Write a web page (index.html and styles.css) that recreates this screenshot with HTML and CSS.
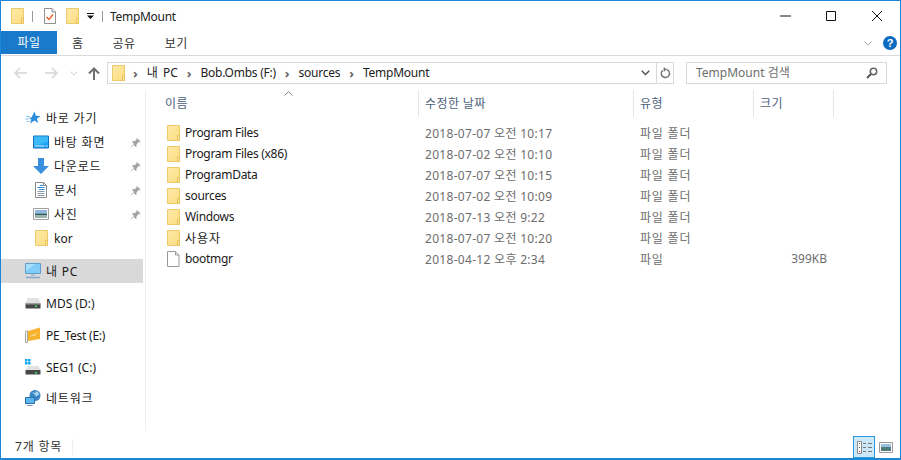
FILE: index.html
```html
<!DOCTYPE html>
<html lang="ko">
<head>
<meta charset="utf-8">
<title>TempMount</title>
<link rel="stylesheet" href="styles.css">
</head>
<body>
<svg class="defs" width="0" height="0" aria-hidden="true">
  <defs>
    <linearGradient id="fg" x1="0" y1="0" x2="1" y2="1">
      <stop offset="0" stop-color="#feeaa8"/>
      <stop offset="1" stop-color="#fbdc82"/>
    </linearGradient>
  </defs>
  <symbol id="folder" viewBox="0 0 13 16">
    <path d="M.5.500h12v15H.5z" fill="url(#fg)" stroke="#ecca6c"/>
    <path d="M10.500 10.500h2v5h-2z" fill="#fbe59c" stroke="#e8c25c"/>
  </symbol>
  <symbol id="pin" viewBox="0 0 11 11">
    <path d="M6.500.5l4 4-1 .8-.8-.2-2.200 2.200.2 1.800-1 .9-2-2L.8 10.500l-.3-.3 3.500-3.100-2-2 .9-1 1.800.2L6.900 2.100l-.2-.8z" fill="#a3a3a3"/>
  </symbol>
  <symbol id="drive" viewBox="0 0 16 12">
    <path d="M2.500 1h11L15.500 6.500H.5z" fill="#e2e2e2"/>
    <path d="M.5 6.500h15v5H.5z" fill="#474747"/>
    <path d="M.5 6.500h15v1H.5z" fill="#9a9a9a"/>
    <path d="M10 8.500h2v1.500h-2z" fill="#39e05a"/>
  </symbol>
</svg>
<div class="window">
  <header class="titlebar">
    <div class="qat">
      <svg class="ico-folder"><use href="#folder"/></svg>
      <span class="qat-sep"></span>
      <svg class="ico-prop" viewBox="0 0 12 16"><path d="M.5.500h7.500l3.500 3.500v11.500H.5z" fill="#fff" stroke="#8f8f8f"/><path d="M8 .5v3.500h3.500" fill="#e8e8e8" stroke="#8f8f8f"/><path d="M2.500 9l2.500 2.500 4-5" fill="none" stroke="#e8642c" stroke-width="1.500"/></svg>
      <svg class="ico-folder qat-gap"><use href="#folder"/></svg>
      <svg class="ico-caret" viewBox="0 0 7 6"><path d="M0 0h7v1H0zM0 2.500h7L3.500 6z" fill="#111"/></svg>
      <span class="qat-sep qat-sep2"></span>
    </div>
    <span class="title">TempMount</span>
    <div class="winctl">
      <svg class="ctl" viewBox="0 0 46 30"><path d="M18 15h11" stroke="#111" fill="none"/></svg>
      <svg class="ctl" viewBox="0 0 46 30"><path d="M18.500 10.500h9v9h-9z" stroke="#111" fill="none"/></svg>
      <svg class="ctl" viewBox="0 0 46 30"><path d="M18 10l10 10M28 10L18 20" stroke="#111" fill="none"/></svg>
    </div>
  </header>

  <nav class="ribbon">
    <span class="tab tab-file">파일</span>
    <span class="tab tab-home">홈</span>
    <span class="tab tab-share">공유</span>
    <span class="tab tab-view">보기</span>
    <svg class="rib-chev" viewBox="0 0 8 5"><path d="M.5.500L4 4 7.500.500" fill="none" stroke="#a8a8a8"/></svg>
    <svg class="help" viewBox="0 0 14 14"><circle cx="7" cy="7" r="7" fill="#0d6cc0"/><text x="7" y="11" class="help-q">?</text></svg>
  </nav>

  <div class="addressbar">
    <svg class="nav-arrow" viewBox="0 0 14 12"><path d="M6 1L1 6l5 5M1 6h12" fill="none" stroke="#d4d4d4" stroke-width="1.500"/></svg>
    <svg class="nav-arrow nav-fwd" viewBox="0 0 14 12"><path d="M8 1l5 5-5 5M13 6H1" fill="none" stroke="#d4d4d4" stroke-width="1.500"/></svg>
    <svg class="nav-down" viewBox="0 0 8 5"><path d="M.5.500L4 4 7.500.500" fill="none" stroke="#d0d0d0"/></svg>
    <svg class="nav-up" viewBox="0 0 12 13"><path d="M1 6.500L6 1.500l5 5M6 2v11" fill="none" stroke="#6f6f6f" stroke-width="2"/></svg>
    <div class="path">
      <svg class="ico-folder path-folder"><use href="#folder"/></svg>
      <span class="crumb-sep">›</span><span class="crumb crumb-pc">내 PC</span>
      <span class="crumb-sep">›</span><span class="crumb">Bob.Ombs (F:)</span>
      <span class="crumb-sep">›</span><span class="crumb">sources</span>
      <span class="crumb-sep">›</span><span class="crumb">TempMount</span>
      <svg class="path-chev" viewBox="0 0 9 6"><path d="M.7.700L4.500 4.500 8.300.700" fill="none" stroke="#555" stroke-width="1.500"/></svg>
      <span class="path-refresh">
        <svg viewBox="0 0 12 13" class="refresh"><path d="M7 2.600A4.500 4.500 0 1 1 3 3.500" fill="none" stroke="#6e6e6e" stroke-width="1.500"/><path d="M4 0v5.500l3-3z" fill="#6e6e6e"/></svg>
      </span>
    </div>
    <div class="search">
      <span class="search-text">TempMount 검색</span>
      <svg class="search-ico" viewBox="0 0 12 12"><circle cx="7.500" cy="4.500" r="3.200" fill="none" stroke="#666" stroke-width="1.500"/><path d="M5 7l-4 4" stroke="#555" stroke-width="2"/></svg>
    </div>
  </div>

  <div class="main">
    <aside class="sidebar">
      <div class="nav-item lvl0">
        <svg class="nico" viewBox="0 0 16 16"><path d="M9.500 1.500l1.400 4.300 4.600.2-3.600 2.700 1.300 4.400-3.700-2.600L5 13.500l1.300-3.900L3.500 7.800l3-.3z" fill="#2b8fdf"/><path d="M1 6.500h3.500M0 9h4M1.500 11.500h3" stroke="#8fc8f0"/></svg>
        <span class="ko">바로 가기</span>
      </div>
      <div class="nav-item lvl1">
        <svg class="nico" viewBox="0 0 16 13"><path d="M.5.500h15v12H.5z" fill="#1ea3f0" stroke="#1070bc"/><path d="M1 1l14 0v5L5 9.500H1z" fill="#3cbaf6"/><path d="M1.500 10.500h10" stroke="#d6f0ff"/><path d="M13 10.500h1.500" stroke="#d6f0ff"/></svg>
        <span class="ko">바탕 화면</span>
        <svg class="pin"><use href="#pin"/></svg>
      </div>
      <div class="nav-item lvl1">
        <svg class="nico" viewBox="0 0 16 16"><path d="M5 0h6v8h5l-8 8-8-8h5z" fill="#3a8ede"/></svg>
        <span class="ko">다운로드</span>
        <svg class="pin"><use href="#pin"/></svg>
      </div>
      <div class="nav-item lvl1">
        <svg class="nico" viewBox="0 0 16 16"><path d="M2.500.5h8l3 3v12h-11z" fill="#fff" stroke="#8a8a8a"/><path d="M10.500.5v3h3" fill="none" stroke="#8a8a8a"/><path d="M7 3.500h3M4.500 5.500h7M6 7.500h5.500" stroke="#2f8fdc"/><path d="M4.500 9.500h7M4.500 11.500h7M4.500 13.500h7" stroke="#8a9aa8"/></svg>
        <span class="ko">문서</span>
        <svg class="pin"><use href="#pin"/></svg>
      </div>
      <div class="nav-item lvl1">
        <svg class="nico" viewBox="0 0 16 13"><path d="M.5 1h15v11H.5z" fill="#fff" stroke="#a0a0a0"/><path d="M2 2.500h12v3.500H2z" fill="#8fb8e0"/><path d="M2 6h12v1.500H2z" fill="#2d5d5a"/><path d="M2 7.500h12v3H2z" fill="#9bb4ac"/></svg>
        <span class="ko">사진</span>
        <svg class="pin"><use href="#pin"/></svg>
      </div>
      <div class="nav-item lvl1">
        <svg class="nico-folder"><use href="#folder"/></svg>
        <span>kor</span>
      </div>
      <div class="nav-item lvl0 selected">
        <svg class="nico" viewBox="0 0 16 16"><path d="M.5.500h15v10H.5z" fill="#7fcdf8" stroke="#5f9fd0"/><path d="M1 1h9L1 8z" fill="#a8e0fc"/><path d="M6 11h4v2H6z" fill="#b3c4d2"/><path d="M1 14.500h14" stroke="#7da8cc" stroke-width="1.500"/></svg>
        <span class="ko">내 PC</span>
      </div>
      <div class="nav-item lvl0 spaced">
        <svg class="nico"><use href="#drive"/></svg>
        <span>MDS (D:)</span>
      </div>
      <div class="nav-item lvl0 spaced">
        <svg class="nico" viewBox="0 0 16 16"><path d="M.5 4h2v11.500h-2z" fill="#f6f6f6" stroke="#a8a8a8"/><path d="M3 4l12-3.500V12L3 14z" fill="#f7b32e"/><path d="M6 9.500l2-2 1 1.500 2.500-3" fill="none" stroke="#fde9b4"/></svg>
        <span class="tight">PE_Test (E:)</span>
      </div>
      <div class="nav-item lvl0 spaced">
        <svg class="nico" viewBox="0 0 16 16"><path d="M0 0h2.500v2.500H0zM3 0h2.500v2.500H3zM0 3h2.500v2.500H0zM3 3h2.500v2.500H3z" fill="#12a8f0"/><path d="M2.500 7h11L15.500 11H.5z" fill="#e2e2e2"/><path d="M.5 11h15v4.500H.5z" fill="#474747"/><path d="M10 13h2v1.500h-2z" fill="#39e05a"/></svg>
        <span>SEG1 (C:)</span>
      </div>
      <div class="nav-item lvl0 spaced net">
        <svg class="nico" viewBox="0 0 16 16"><circle cx="10" cy="5.500" r="5.500" fill="#3a86c4"/><path d="M7 2l3 1 2-2 2.500 3-3 2.500z" fill="#a6d3ee"/><path d="M.5 7.500h9v6h-9z" fill="#5cb6f0" stroke="#2b6fa8"/><path d="M2.500 15.500h5" stroke="#6a93b3"/></svg>
        <span class="ko">네트워크</span>
      </div>
    </aside>

    <section class="files">
      <div class="columns">
        <span class="col col-name">이름</span>
        <span class="col col-date">수정한 날짜</span>
        <span class="col col-type">유형</span>
        <span class="col col-size">크기</span>
        <svg class="sort" viewBox="0 0 9 5"><path d="M.5 4.500L4.500.7l4 3.800" fill="none" stroke="#7d7d7d"/></svg>
      </div>
      <div class="rows">
        <div class="row"><span class="c-name"><svg class="ficon"><use href="#folder"/></svg>Program Files</span><span class="c-date">2018-07-07 오전 10:17</span><span class="c-type">파일 폴더</span><span class="c-size"></span></div>
        <div class="row"><span class="c-name"><svg class="ficon"><use href="#folder"/></svg>Program Files (x86)</span><span class="c-date">2018-07-02 오전 10:10</span><span class="c-type">파일 폴더</span><span class="c-size"></span></div>
        <div class="row"><span class="c-name"><svg class="ficon"><use href="#folder"/></svg>ProgramData</span><span class="c-date">2018-07-07 오전 10:15</span><span class="c-type">파일 폴더</span><span class="c-size"></span></div>
        <div class="row"><span class="c-name"><svg class="ficon"><use href="#folder"/></svg>sources</span><span class="c-date">2018-07-02 오전 10:09</span><span class="c-type">파일 폴더</span><span class="c-size"></span></div>
        <div class="row"><span class="c-name"><svg class="ficon"><use href="#folder"/></svg>Windows</span><span class="c-date">2018-07-13 오전 9:22</span><span class="c-type">파일 폴더</span><span class="c-size"></span></div>
        <div class="row"><span class="c-name c-name-ko"><svg class="ficon"><use href="#folder"/></svg>사용자</span><span class="c-date">2018-07-07 오전 10:20</span><span class="c-type">파일 폴더</span><span class="c-size"></span></div>
        <div class="row"><span class="c-name"><svg class="ficon" viewBox="0 0 13 16"><path d="M.5.500h8l3.500 3.500v11.500H.5z" fill="#fff" stroke="#9a9a9a"/><path d="M8.500 .5v3.500h3.500" fill="none" stroke="#9a9a9a"/></svg>bootmgr</span><span class="c-date">2018-04-12 오후 2:34</span><span class="c-type">파일</span><span class="c-size">399KB</span></div>
      </div>
    </section>
  </div>

  <footer class="status">
    <span class="count">7개 항목</span>
    <div class="views">
      <span class="view active">
        <svg viewBox="0 0 15 13" class="view-ico"><path d="M.5.500h4v12h-4z" fill="#fff" stroke="#8a8a8a"/><path d="M2 2h1v1H2zM2 6h1v1H2z" fill="#555"/><path d="M2 10h1v1H2z" fill="#d22"/><path d="M6 2.500h3M11 2.500h4M6 6.500h3M11 6.500h4M6 10.500h3M11 10.500h4" stroke="#777"/></svg>
      </span>
      <span class="view">
        <svg viewBox="0 0 14 11" class="view-ico2"><path d="M.5.500h13v10H.5z" fill="#fff" stroke="#999"/><path d="M2 2h10v3H2z" fill="#9cc0e0"/><path d="M2 5h10v4H2z" fill="#4f7b78"/></svg>
      </span>
    </div>
  </footer>
</div>
</body>
</html>
```

FILE: styles.css
```css
* { box-sizing: border-box; }
html, body { margin: 0; padding: 0; height: 100%; }
body {
  font-family: "Noto Sans", "Noto Sans CJK KR", sans-serif;
  font-size: 12px;
  color: #1a1a1a;
  background: #fff;
  overflow: hidden;
}
.defs { position: absolute; }
.window {
  width: 901px;
  height: 460px;
  border: 1px solid #1a86d8;
  border-bottom-width: 2px;
  display: flex;
  flex-direction: column;
  background: #fff;
}

/* title bar */
.titlebar { height: 30px; display: flex; align-items: center; flex: none; position: relative; }
.qat { display: flex; align-items: center; padding-left: 10px; }
.ico-folder { width: 13px; height: 16px; flex: none; }
.qat-sep { width: 1px; height: 11px; background: #9a9a9a; margin: 0 11px 0 8px; }
.qat-sep2 { margin: 0 7px 0 8px; }
.ico-prop { width: 12px; height: 16px; }
.qat-gap { margin-left: 10px; }
.ico-caret { width: 7px; height: 6px; margin-left: 8px; }
.title { font-size: 12px; color: #222; letter-spacing: -0.3px; }
.winctl { margin-left: auto; display: flex; }
.ctl { width: 46px; height: 30px; display: block; }

/* ribbon */
.ribbon {
  height: 25px;
  flex: none;
  display: flex;
  align-items: center;
  border-bottom: 1px solid #dadada;
  position: relative;
}
.tab { line-height: 23px; color: #333; letter-spacing: 0.5px; }
.tab-file { width: 56px; height: 23px; background: #1979ca; color: #fff; text-align: center; align-self: flex-start; }
.tab-home { margin-left: 15px; }
.tab-share { margin-left: 29px; }
.tab-view { margin-left: 29px; }
.rib-chev { width: 8px; height: 5px; margin-left: auto; margin-right: 11px; }
.help { width: 14px; height: 14px; margin-right: 3px; }
.help-q { font: bold 11px "Liberation Sans", sans-serif; fill: #fff; text-anchor: middle; }

/* address bar */
.addressbar {
  height: 34px;
  flex: none;
  display: flex;
  align-items: center;
  padding-left: 13px;
}
.nav-arrow { width: 14px; height: 12px; flex: none; }
.nav-fwd { margin-left: 16px; }
.nav-down { width: 8px; height: 5px; margin-left: 12px; flex: none; }
.nav-up { width: 12px; height: 13px; margin-left: 10px; flex: none; }
.path {
  width: 567px;
  height: 22px;
  margin-left: 7px;
  border: 1px solid #d9d9d9;
  display: flex;
  align-items: center;
  padding-left: 4px;
  flex: none;
}
.path-folder { margin-right: -1px; }
.crumb-sep { color: #666; margin: 0 9px; font-size: 13px; line-height: 20px; font-weight: 700; }
.crumb { color: #222; letter-spacing: -0.25px; margin-bottom: 2px; }
.crumb-pc { word-spacing: 2px; letter-spacing: 0; }
.path-chev { width: 9px; height: 6px; margin-left: auto; margin-right: 6px; }
.path-refresh {
  width: 17px;
  height: 20px;
  border-left: 1px solid #d9d9d9;
  display: flex;
  align-items: center;
  justify-content: center;
}
.refresh { width: 11px; height: 12px; }
.search {
  width: 201px;
  height: 22px;
  margin-left: 12px;
  border: 1px solid #d9d9d9;
  display: flex;
  align-items: center;
  justify-content: space-between;
  padding: 0 8px 0 9px;
  flex: none;
}
.search-text { color: #6d6d6d; margin-bottom: 2px; }
.search-ico { width: 12px; height: 12px; }

/* main */
.main { flex: 1; display: flex; min-height: 0; }
.sidebar {
  width: 145px;
  flex: none;
  padding-top: 16px;
  border-right: 1px solid #f0f0f0;
}
.nav-item {
  height: 24px;
  display: flex;
  align-items: center;
  width: 142px;
  position: relative;
  color: #1a1a1a;
}
.nav-item > span { margin-left: 5px; }
.ko { letter-spacing: 0.8px; }
.tight { letter-spacing: -0.25px; }
.lvl0 { padding-left: 24px; }
.lvl1 { padding-left: 32px; }
.selected { background: #d9d9d9; margin-top: 9px; }
.spaced { margin-top: 8px; }
.net { margin-top: 7px; }
.nico { width: 16px; height: 16px; flex: none; }
.nico-folder { width: 13px; height: 16px; flex: none; margin: 0 1px 0 2px; }
.pin { width: 11px; height: 11px; position: absolute; left: 129px; top: 7px; }

/* file list */
.files { flex: 1; min-width: 0; }
.columns {
  height: 28px;
  display: grid;
  grid-template-columns: 273px 215px 120px 80px;
  position: relative;
}
.col {
  color: #4c607a;
  padding-left: 6px;
  line-height: 27px;
  border-right: 1px solid #e5e5e5;
  height: 27px;
  letter-spacing: 0.4px;
}
.col-name { padding-left: 19px; }
.sort { width: 9px; height: 5px; position: absolute; left: 138px; top: 1px; }
.rows { padding-top: 4px; }
.row {
  height: 21px;
  display: grid;
  grid-template-columns: 273px 215px 120px 80px;
  align-items: center;
  color: #6d6d6d;
}
.c-name { display: flex; align-items: center; padding-left: 21px; color: #1a1a1a; letter-spacing: -0.3px; }
.c-name-ko { letter-spacing: 1px; }
.ficon { width: 13px; height: 16px; margin-right: 5px; flex: none; }
.c-date { padding-left: 6px; letter-spacing: 0.3px; }
.c-type { padding-left: 6px; letter-spacing: 0.8px; }
.c-size { text-align: right; padding-right: 7px; }

/* status */
.status {
  height: 27px;
  flex: none;
  display: flex;
  align-items: center;
  padding: 4px 0 0 14px;
  color: #333;
}
.count { padding-right: 10px; border-right: 1px solid #eee; line-height: 16px; letter-spacing: 0.8px; }
.views { margin-left: auto; margin-right: 3px; display: flex; align-self: flex-end; }
.view { width: 22px; height: 22px; display: flex; align-items: center; justify-content: center; }
.view.active { background: #cce8f8; border: 1px solid #2a9ad8; }
.view-ico { width: 15px; height: 13px; }
.view-ico2 { width: 14px; height: 11px; }
```
